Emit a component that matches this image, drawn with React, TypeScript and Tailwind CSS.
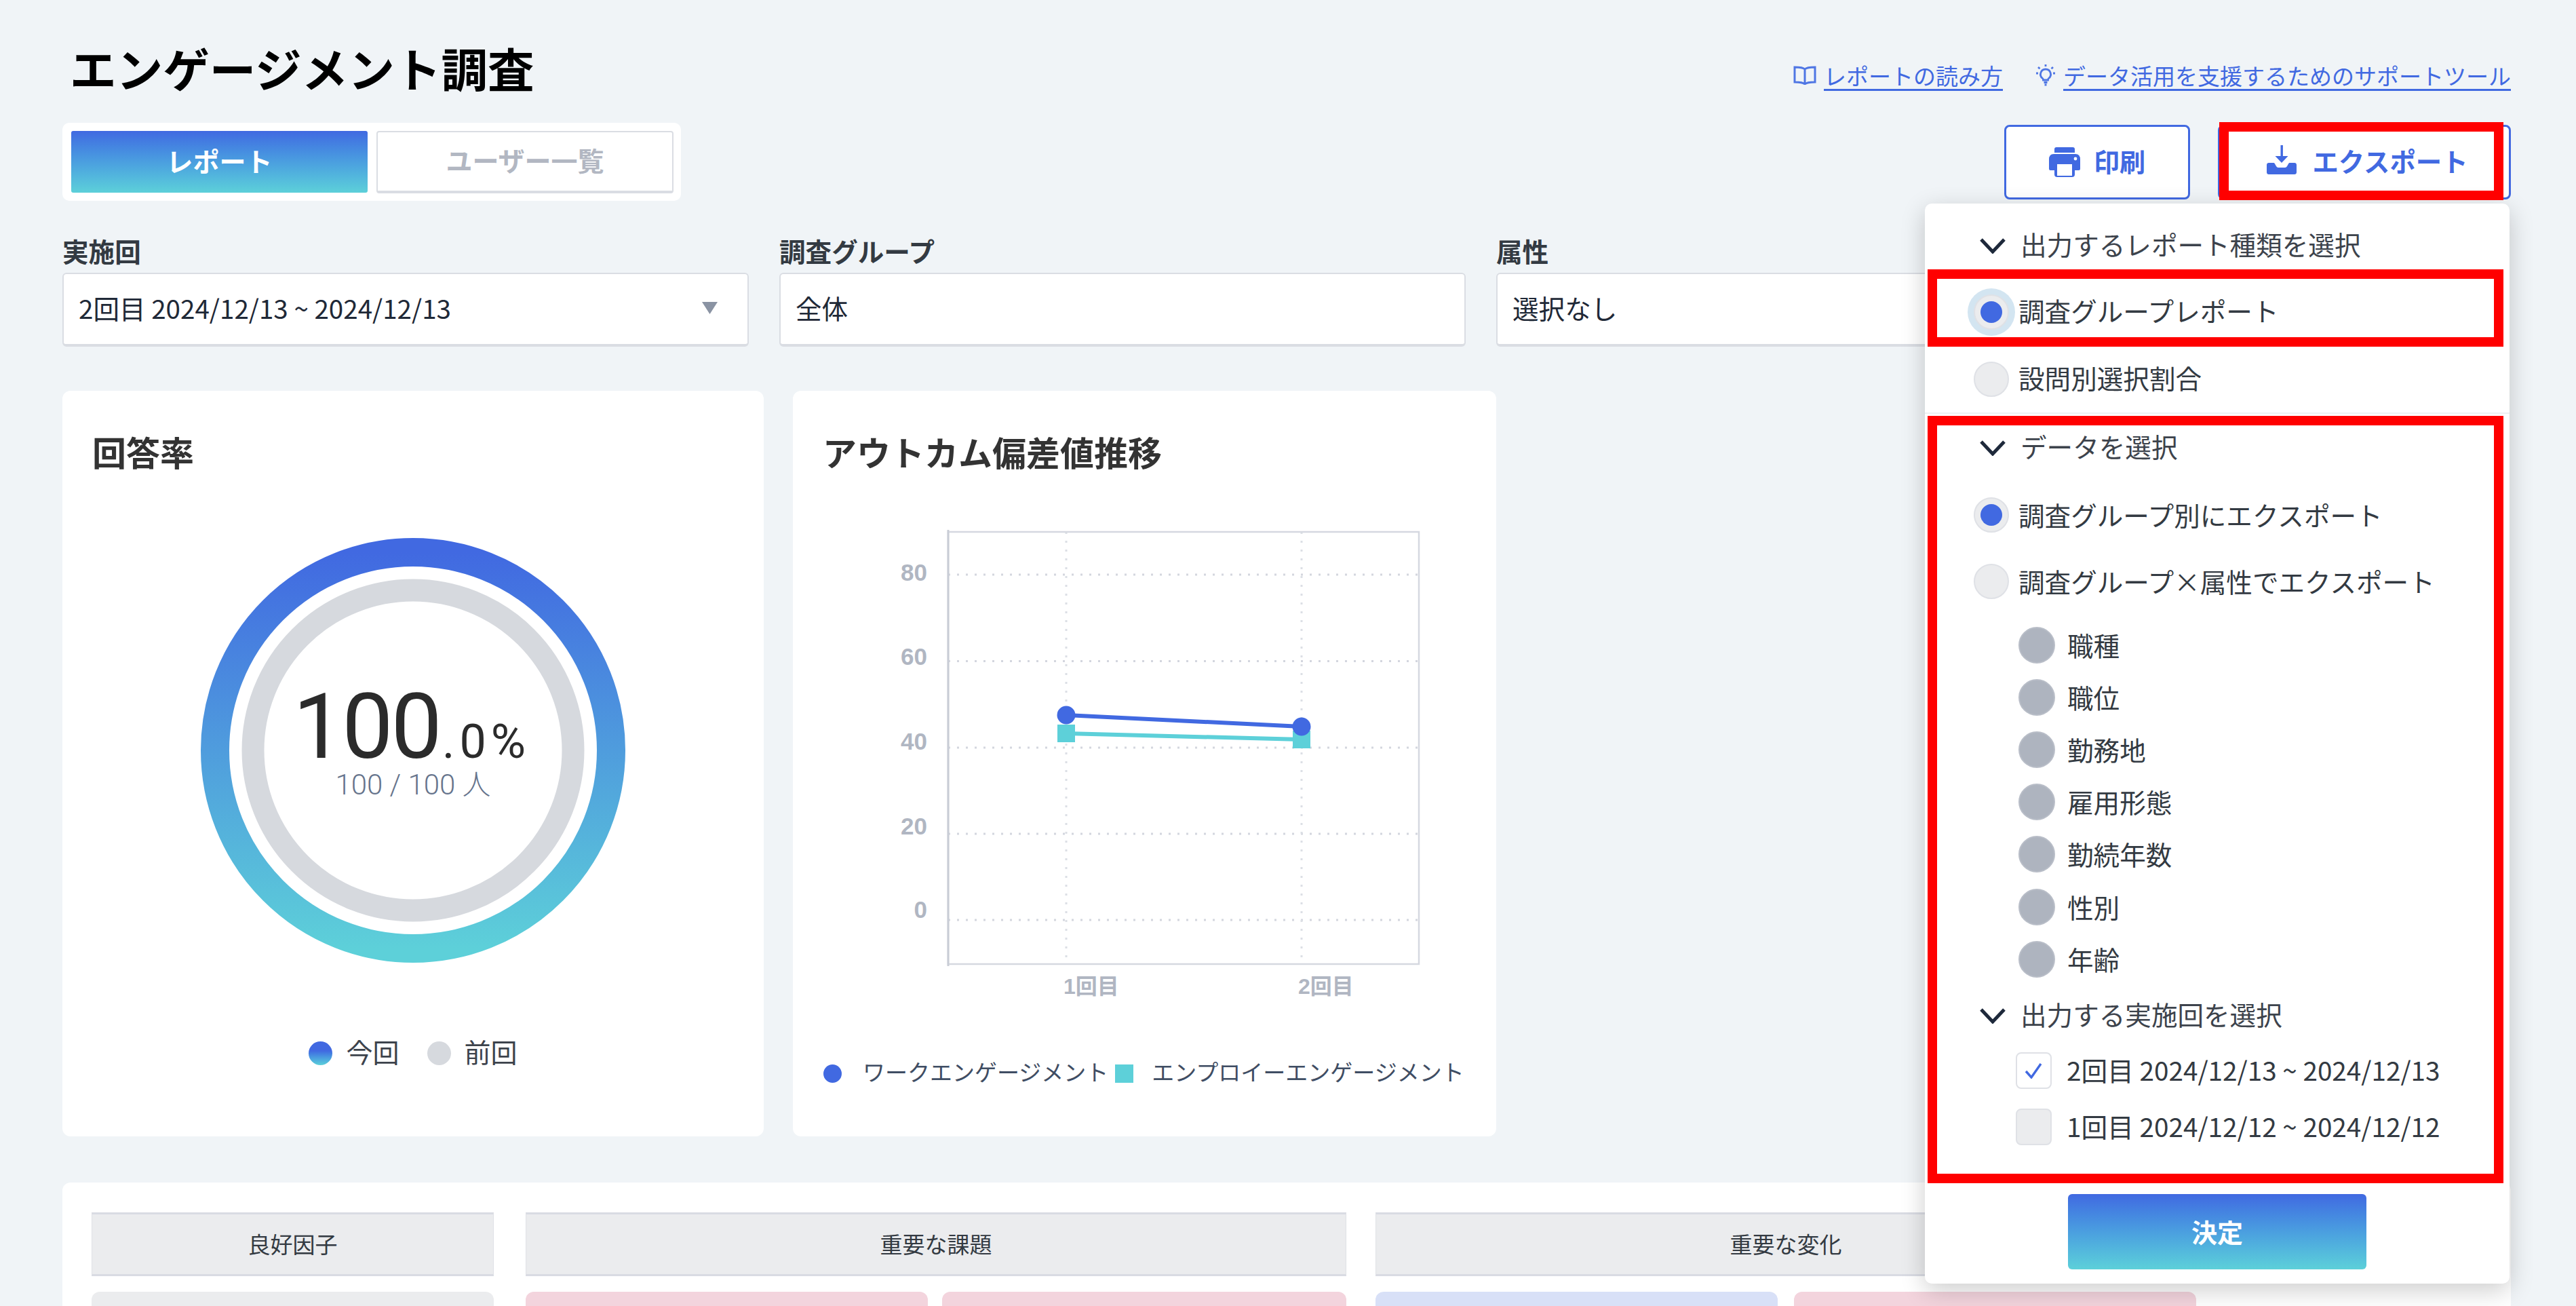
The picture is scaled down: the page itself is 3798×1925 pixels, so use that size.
import React from "react";

const Chevron = () => (
  <svg width="38" height="24" viewBox="0 0 38 24" fill="none" className="shrink-0">
    <path d="M2 3 L19 21 L36 3" stroke="#1e293b" strokeWidth="5" />
  </svg>
);

const Head = ({ text, cls }: { text: string; cls: string }) => (
  <div className={`flex items-center gap-[22px] pl-[81px] text-[38.6px] text-[#3d434c] ${cls}`}>
    <Chevron />
    <span className="pb-[4px]">{text}</span>
  </div>
);

const Radio = ({ text, on, halo, cls, low }: { text: string; on?: boolean; halo?: boolean; cls: string; low?: boolean }) => (
  <div className={`flex items-center gap-[14px] pl-[72px] text-[38.6px] text-[#333a42] ${cls}`}>
    <div className={`relative flex h-[52px] w-[52px] shrink-0 items-center justify-center rounded-full border-2 border-[#dfe1e6] bg-[#ebecee] ${halo ? "shadow-[0_0_0_9px_#d3e5f1]" : ""}`}>
      {on && <div className="h-[32px] w-[32px] rounded-full bg-[#4169e1]" />}
    </div>
    <span className={low ? "" : "pb-[4px]"}>{text}</span>
  </div>
);

const Sub = ({ text }: { text: string }) => (
  <div className="flex h-[77.2px] items-center gap-[18px] pl-[138px] text-[38.6px] text-[#333a42]">
    <div className="h-[54px] w-[54px] shrink-0 rounded-full border-2 border-[#b9bec8] bg-[#aeb4bf]" />
    <span>{text}</span>
  </div>
);

const Check = ({ text, on }: { text: string; on?: boolean }) => (
  <div className="flex h-[83px] items-center gap-[22px] pl-[134px] text-[38.7px] text-[#333a42]">
    <div className={`flex h-[54px] w-[53px] shrink-0 items-center justify-center rounded-[8px] border-2 border-[#dfe1e6] ${on ? "bg-white" : "bg-[#ebecee]"}`}>
      {on && (
        <svg width="28" height="24" viewBox="0 0 28 24" fill="none">
          <path d="M2 13 L10 22 L24 2" stroke="#4169e1" strokeWidth="3.4" />
        </svg>
      )}
    </div>
    <span className="pb-[4px]">{text}</span>
  </div>
);

const Select = ({ label, value, arrow }: { label: string; value: string; arrow?: boolean }) => (
  <div className="w-[1012px] shrink-0">
    <div className="h-[54px] pb-[3px] text-[38.6px] font-bold leading-[43px] text-[#333a42]">{label}</div>
    <div className="flex h-[109px] items-center justify-between rounded-[6px] border-2 border-b-4 border-[#dadde3] bg-white pl-[22px] pr-[44px] text-[38.6px] text-[#1f2937]">
      <span className="pb-[4px]">{value}</span>
      {arrow && (
        <svg width="23" height="18" viewBox="0 0 23 18" className="mb-[4px]">
          <path d="M0 0 H23 L11.5 18 Z" fill="#8a93a3" />
        </svg>
      )}
    </div>
  </div>
);

const HeaderCell = ({ text, w }: { text: string; w: string }) => (
  <div className={`flex h-[94px] items-center justify-center border-x border-y-[3px] border-x-[#dfe1e6] border-y-[#d9dbe3] bg-[#ebecee] text-[33px] text-[#333a42] ${w}`}>
    {text}
  </div>
);

const App = () => {
  const gridY = [846, 973.5, 1101, 1228, 1355];
  const yLabels: [string, number][] = [["80", 843], ["60", 967], ["40", 1092], ["20", 1217], ["0", 1340]];
  return (
    <div className="relative h-[1925px] w-[3798px] overflow-hidden bg-[#f0f4f7] pl-[92px] pr-[96px] font-['Noto_Sans_CJK_JP','Noto_Sans',sans-serif]">
      <div className="flex h-[134px] items-start justify-between pt-[64px]">
        <h1 className="pl-[11px] text-[68.6px] font-bold leading-[70px] text-black">エンゲージメント調査</h1>
        <div className="flex items-center pt-[27px] text-[33px] leading-[40px] text-[#4169e1]">
          <svg width="34" height="28" viewBox="0 0 34 28" fill="none" className="mr-[11px]">
            <path d="M17 5 C14 2 8 2 2 2 V24 C8 24 14 24 17 27 C20 24 26 24 32 24 V2 C26 2 20 2 17 5 Z M17 5 V27" stroke="#4f76e4" strokeWidth="3" />
          </svg>
          <span className="underline decoration-[3px] underline-offset-[6px]">レポートの読み方</span>
          <svg width="30" height="34" viewBox="0 0 30 34" fill="none" className="ml-[48px] mr-[11px]">
            <path d="M15 8 a7.5 7.5 0 0 0-4.5 13.5 c1 .8 1 1.5 1 2.5 h7 c0-1 0-1.7 1-2.5 A7.5 7.5 0 0 0 15 8z M12.5 27.5h5 M13.5 31h3 M15 1v3 M4 5l2.5 2.2 M26 5l-2.5 2.2 M1 14h3 M26 14h3" stroke="#4f76e4" strokeWidth="2.8" />
          </svg>
          <span className="underline decoration-[3px] underline-offset-[6px]">データ活用を支援するためのサポートツール</span>
        </div>
      </div>

      <div className="mt-[47px] flex items-center justify-between">
        <div className="flex h-[115px] w-[912px] items-center gap-[13px] rounded-[10px] bg-white pl-[13px] pr-[11px]">
          <div className="flex h-[91px] w-[437px] items-center justify-center rounded-[3px] bg-linear-to-b from-[#4169e1] to-[#5dd0d9] pb-[4px] text-[39px] font-bold text-white">
            レポート
          </div>
          <div className="flex h-[92px] w-[438px] items-center justify-center rounded-[4px] border-2 border-b-4 border-[#dadde3] bg-white pb-[4px] text-[39px] font-bold text-[#b2b7c2]">
            ユーザー一覧
          </div>
        </div>
        <div className="flex gap-[41px]">
          <div className="flex h-[110px] w-[274px] items-center justify-center gap-[20px] rounded-[8px] border-[3px] border-[#4169e1] bg-white text-[38px] font-bold text-[#4169e1]">
            <svg width="46" height="44" viewBox="0 0 46 44">
              <path d="M11 0 H35 Q38 0 38 3 V8 H8 V3 Q8 0 11 0 Z" fill="#4169e1" />
              <path d="M7 10 H39 Q46 10 46 18 V32 Q46 34 44 34 H38 V40 Q38 44 34 44 H12 Q8 44 8 40 V34 H2 Q0 34 0 32 V18 Q0 10 7 10 Z" fill="#4169e1" />
              <rect x="12" y="25" width="22" height="17" fill="#fff" />
              <circle cx="39" cy="17" r="2.4" fill="#fff" />
            </svg>
            <span className="pb-[4px]">印刷</span>
          </div>
          <div className="flex h-[110px] w-[432px] items-center justify-center gap-[23px] rounded-[8px] border-[3px] border-[#4169e1] bg-white pl-[9px] text-[38.4px] font-bold text-[#4169e1]">
            <svg width="44" height="44" viewBox="0 0 44 44" className="mb-[6px]">
              <rect x="20.5" y="0" width="3.4" height="17" fill="#4169e1" />
              <path d="M12.5 16 H31.5 L22 26 Z" fill="#4169e1" />
              <path d="M3 26h7c1 0 1.5.5 2 1.5 l2 3.5 c.7 1.2 1.8 2 3 2 h10 c1.2 0 2.3-.8 3-2 l2-3.5 c.5-1 1-1.5 2-1.5 h7 c1.7 0 3 1.3 3 3 v11 c0 1.7-1.3 3-3 3 H3 c-1.7 0-3-1.3-3-3 V29 c0-1.7 1.3-3 3-3z" fill="#4169e1" />
            </svg>
            <span className="pb-[4px]">エクスポート</span>
          </div>
        </div>
      </div>

      <div className="mt-[52px] flex gap-[45px]">
        <Select label="実施回" value="2回目 2024/12/13 ~ 2024/12/13" arrow />
        <Select label="調査グループ" value="全体" />
        <Select label="属性" value="選択なし" />
      </div>

      <div className="mt-[65px] flex h-[1099px] gap-[43px]">
        <div className="w-[1034px] rounded-[12px] bg-white pt-[64px]">
          <div className="pl-[44px] text-[50px] font-bold leading-[50px] text-[#333333]">回答率</div>
          <div className="relative mx-auto mt-[102px] h-[628px] w-[628px]">
            <svg width="628" height="628" viewBox="0 0 628 628" fill="none">
              <defs>
                <linearGradient id="ring" x1="0" y1="0" x2="0" y2="1">
                  <stop offset="0" stopColor="#4169e1" />
                  <stop offset="1" stopColor="#5dd0d9" />
                </linearGradient>
              </defs>
              <circle cx="314" cy="314" r="292" stroke="url(#ring)" strokeWidth="42" />
              <circle cx="314" cy="314" r="236" stroke="#d6d9de" strokeWidth="33" />
            </svg>
            <div className="absolute inset-x-0 top-[218px] flex flex-col items-center">
              <div className="mr-[4px] h-[124px] whitespace-nowrap font-['Roboto',sans-serif] leading-[124px] text-[#2b2b2b]">
                <span className="text-[134px] tracking-[-3px]">100</span>
                <span className="pl-[3px] text-[70px] tracking-[7px]">.0%</span>
              </div>
              <div className="mt-[1px] font-['Roboto','Noto_Sans_CJK_JP',sans-serif] text-[42px] font-light leading-[44px] text-[#66748c]">100 / 100 人</div>
            </div>
          </div>
          <div className="mt-[109px] flex h-[46px] items-center justify-center gap-[20px] text-[39px] text-[#3d434c]">
            <div className="h-[35px] w-[35px] rounded-full bg-linear-to-b from-[#4169e1] from-40% to-[#5dd0d9]" />
            <span className="pb-[5px]">今回</span>
            <div className="ml-[21px] h-[35px] w-[35px] rounded-full bg-[#d6d9de]" />
            <span className="pb-[5px]">前回</span>
          </div>
        </div>

        <div className="w-[1037px] rounded-[12px] bg-white pt-[64px]">
          <div className="pl-[44px] text-[50px] font-bold leading-[50px] text-[#333333]">アウトカム偏差値推移</div>
          <svg width="1037" height="720" viewBox="0 0 1037 720" fill="none" className="mt-[71px] block">
            <g transform="translate(-1169,-760)">
              {gridY.map((y) => (
                <path key={y} d={`M1398 ${y} H2092`} stroke="#d3d6de" strokeWidth="3" strokeDasharray="3 10" />
              ))}
              <path d="M1572 783 V1420 M1919 783 V1420" stroke="#dcdfe5" strokeWidth="3" strokeDasharray="3 10" />
              <path d="M1398 783 H2092 V1420 H1398 Z" stroke="#d5d8e0" strokeWidth="2.5" />
              <path d="M1398 780 V1423" stroke="#c9cdd6" strokeWidth="3" />
              <path d="M1572 1080 L1919 1089" stroke="#5dd0d9" strokeWidth="6" />
              <rect x="1559" y="1067" width="26" height="26" fill="#5dd0d9" />
              <rect x="1906" y="1076" width="26" height="26" fill="#5dd0d9" />
              <path d="M1572 1053 L1919 1070" stroke="#4169e1" strokeWidth="6" />
              <circle cx="1572" cy="1053" r="13.5" fill="#4169e1" />
              <circle cx="1919" cy="1070" r="13.5" fill="#4169e1" />
              <g fontFamily="'Liberation Sans','Noto Sans CJK JP',sans-serif" fontWeight="700" fill="#b0b6c2">
                {yLabels.map(([t, y]) => (
                  <text key={t} x="1367" y={y + 12} fontSize="35" textAnchor="end">{t}</text>
                ))}
                <text x="1568" y="1464" fontSize="32">1回目</text>
                <text x="1914" y="1464" fontSize="32">2回目</text>
              </g>
            </g>
          </svg>
          <div className="mt-[78px] flex h-[46px] items-center whitespace-nowrap pl-[45px] text-[33px] text-[#3f4d63]">
            <div className="h-[27px] w-[27px] shrink-0 rounded-full bg-[#4169e1]" />
            <span className="ml-[31px] pb-[4px]">ワークエンゲージメント</span>
            <div className="ml-[10px] h-[27px] w-[27px] shrink-0 bg-[#5dd0d9]" />
            <span className="ml-[27px] pb-[4px]">エンプロイーエンゲージメント</span>
          </div>
        </div>
      </div>

      <div className="mt-[68px] h-[300px] rounded-t-[12px] bg-white pl-[43px] pt-[44px]">
        <div className="flex">
          <HeaderCell text="良好因子" w="w-[593px]" />
          <HeaderCell text="重要な課題" w="ml-[47px] w-[1210px]" />
          <HeaderCell text="重要な変化" w="ml-[43px] w-[1210px]" />
        </div>
        <div className="mt-[23px] flex h-[100px]">
          <div className="w-[593px] rounded-t-[12px] bg-[#ebecee]" />
          <div className="ml-[47px] w-[593px] rounded-t-[12px] bg-[#f3d4dd]" />
          <div className="ml-[21px] w-[596px] rounded-t-[12px] bg-[#f3d4dd]" />
          <div className="ml-[43px] w-[593px] rounded-t-[12px] bg-[#d8e0f7]" />
          <div className="ml-[24px] w-[593px] rounded-t-[12px] bg-[#f3d4dd]" />
        </div>
      </div>

      <div className="absolute left-[2838px] top-[300px] h-[1592px] w-[862px] rounded-[10px] bg-white pt-[22px] shadow-[0_10px_36px_rgba(0,0,0,0.2)]">
        <Head text="出力するレポート種類を選択" cls="h-[78px] pt-[2px]" />
        <Radio text="調査グループレポート" on halo cls="h-[120px]" />
        <Radio text="設問別選択割合" cls="h-[78px]" />
        <div className="mt-[10px] h-[2px] bg-[#eef0f3]" />
        <Head text="データを選択" cls="h-[100px]" />
        <Radio text="調査グループ別にエクスポート" on low cls="h-[98px]" />
        <Radio text="調査グループ×属性でエクスポート" low cls="h-[98px]" />
        <div className="mt-[6px]">
          {["職種", "職位", "勤務地", "雇用形態", "勤続年数", "性別", "年齢"].map((t) => (
            <Sub key={t} text={t} />
          ))}
        </div>
        <Head text="出力する実施回を選択" cls="h-[84px] pt-[6px]" />
        <Check text="2回目 2024/12/13 ~ 2024/12/13" on />
        <Check text="1回目 2024/12/12 ~ 2024/12/12" />
        <div className="mx-auto mt-[58px] flex h-[111px] w-[440px] items-center justify-center rounded-[6px] bg-linear-to-b from-[#4169e1] to-[#5dd0d9] pb-[2px] text-[38px] font-bold text-white">
          決定
        </div>
      </div>

      <div className="absolute left-[3272px] top-[180px] h-[115px] w-[419px] border-[14px] border-[#ff0000]" />
      <div className="absolute left-[2842px] top-[397px] h-[114px] w-[849px] border-[14px] border-[#ff0000]" />
      <div className="absolute left-[2842px] top-[613px] h-[1131px] w-[849px] border-[14px] border-[#ff0000]" />
    </div>
  );
};

export default App;
